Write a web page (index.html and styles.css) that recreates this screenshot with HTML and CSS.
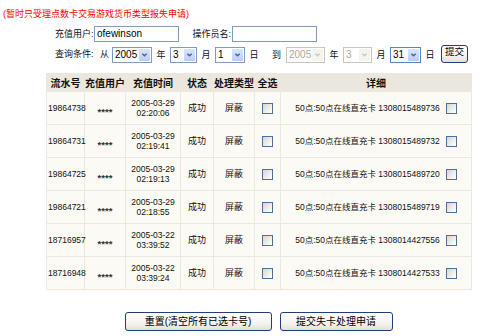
FILE: index.html
```html
<!DOCTYPE html>
<html lang="zh-CN">
<head>
<meta charset="utf-8">
<title>报失申请</title>
<link rel="stylesheet" href="styles.css">
</head>
<body>
<p class="notice">(暂时只受理点数卡交易游戏货币类型报失申请)</p>
<form class="query">
  <div class="row row-user">
    <span class="label lbl-user">充值用户:</span>
    <span class="textbox tb-user">ofewinson</span>
    <span class="label lbl-op">操作员名:</span>
    <span class="textbox tb-op"></span>
  </div>
  <div class="row row-date">
    <span class="label lbl-cond">查询条件:</span>
    <span class="label lbl-from">从</span>
    <span class="select w40"><span class="val">2005</span><span class="arrow"><svg viewBox="0 0 11 14" width="11" height="14"><path d="M3 5.5 L5.5 8 L8 5.5" fill="none" stroke="#4d6185" stroke-width="1.6"/></svg></span></span>
    <span class="unit">年</span>
    <span class="select w27"><span class="val">3</span><span class="arrow"><svg viewBox="0 0 11 14" width="11" height="14"><path d="M3 5.5 L5.5 8 L8 5.5" fill="none" stroke="#4d6185" stroke-width="1.6"/></svg></span></span>
    <span class="unit">月</span>
    <span class="select w30"><span class="val">1</span><span class="arrow"><svg viewBox="0 0 11 14" width="11" height="14"><path d="M3 5.5 L5.5 8 L8 5.5" fill="none" stroke="#4d6185" stroke-width="1.6"/></svg></span></span>
    <span class="unit">日</span>
    <span class="unit unit-to">到</span>
    <span class="select w39 disabled"><span class="val">2005</span><span class="arrow"><svg viewBox="0 0 11 14" width="11" height="14"><path d="M3 5.5 L5.5 8 L8 5.5" fill="none" stroke="#c9c7ba" stroke-width="1.6"/></svg></span></span>
    <span class="unit">年</span>
    <span class="select w29 disabled"><span class="val">3</span><span class="arrow"><svg viewBox="0 0 11 14" width="11" height="14"><path d="M3 5.5 L5.5 8 L8 5.5" fill="none" stroke="#c9c7ba" stroke-width="1.6"/></svg></span></span>
    <span class="unit">月</span>
    <span class="select w31 focus"><span class="val">31</span><span class="arrow"><svg viewBox="0 0 11 14" width="11" height="14"><path d="M3 5.5 L5.5 8 L8 5.5" fill="none" stroke="#4d6185" stroke-width="1.6"/></svg></span></span>
    <span class="unit">日</span>
    <button type="button" class="btn btn-submit">提交</button>
  </div>
</form>

<table class="records">
  <colgroup>
    <col class="c1"><col class="c2"><col class="c3"><col class="c4"><col class="c5"><col class="c6"><col class="c7">
  </colgroup>
  <thead>
    <tr><th>流水号</th><th>充值用户</th><th>充值时间</th><th>状态</th><th>处理类型</th><th>全选</th><th>详细</th></tr>
  </thead>
  <tbody>
    <tr><td class="sn">19864738</td><td class="user">****</td><td class="time">2005-03-29<br>02:20:06</td><td>成功</td><td>屏蔽</td><td><span class="check"></span></td><td class="detail"><span class="dtext">50点:50点在线直充卡 1308015489736</span><span class="check"></span></td></tr>
    <tr><td class="sn">19864731</td><td class="user">****</td><td class="time">2005-03-29<br>02:19:41</td><td>成功</td><td>屏蔽</td><td><span class="check"></span></td><td class="detail"><span class="dtext">50点:50点在线直充卡 1308015489732</span><span class="check"></span></td></tr>
    <tr><td class="sn">19864725</td><td class="user">****</td><td class="time">2005-03-29<br>02:19:13</td><td>成功</td><td>屏蔽</td><td><span class="check"></span></td><td class="detail"><span class="dtext">50点:50点在线直充卡 1308015489720</span><span class="check"></span></td></tr>
    <tr><td class="sn">19864721</td><td class="user">****</td><td class="time">2005-03-29<br>02:18:55</td><td>成功</td><td>屏蔽</td><td><span class="check"></span></td><td class="detail"><span class="dtext">50点:50点在线直充卡 1308015489719</span><span class="check"></span></td></tr>
    <tr><td class="sn">18716957</td><td class="user">****</td><td class="time">2005-03-22<br>03:39:52</td><td>成功</td><td>屏蔽</td><td><span class="check"></span></td><td class="detail"><span class="dtext">50点:50点在线直充卡 1308014427556</span><span class="check"></span></td></tr>
    <tr><td class="sn">18716948</td><td class="user">****</td><td class="time">2005-03-22<br>03:39:24</td><td>成功</td><td>屏蔽</td><td><span class="check"></span></td><td class="detail"><span class="dtext">50点:50点在线直充卡 1308014427533</span><span class="check"></span></td></tr>
  </tbody>
</table>

<div class="actions">
  <button type="button" class="btn btn-reset">重置(清空所有已选卡号)</button>
  <button type="button" class="btn btn-lost">提交失卡处理申请</button>
</div>
</body>
</html>
```

FILE: styles.css
```css
html, body {
  margin: 0;
  padding: 0;
  background: #fff;
}
body {
  width: 500px;
  height: 336px;
  overflow: hidden;
  font-family: "Liberation Sans", "Noto Sans CJK SC", sans-serif;
  font-size: 9px;
  color: #111;
}
.notice {
  margin: 0;
  padding: 9px 0 0 3px;
  height: 10px;
  line-height: 10px;
  font-size: 9px;
  color: #ff0000;
}

.query {
  margin: 0;
  padding: 7px 0 0 55px;
}
.row {
  display: flex;
  align-items: center;
}
.row-user {
  height: 16px;
}
.row-date {
  margin-top: 3px;
  height: 18px;
}
.label {
  font-size: 9px;
  line-height: 12px;
  white-space: nowrap;
}
.lbl-user { width: 39px; }
.lbl-op { width: 52px; text-align: right; padding-right: 1px; }
.lbl-cond { width: 45px; }
.lbl-from { width: 12px; }

.textbox {
  box-sizing: border-box;
  height: 16px;
  border: 1px solid #7f9db9;
  background: #fff;
  font-size: 10px;
  line-height: 14px;
  padding-left: 2px;
  color: #000;
}
.tb-user { width: 85px; }
.tb-op { width: 85px; }

.select {
  box-sizing: border-box;
  height: 16px;
  border: 1px solid #7f9db9;
  background: #fff;
  display: flex;
  align-items: stretch;
  font-size: 10px;
  color: #000;
  align-self: flex-end;
}
.select .val {
  flex: 1;
  line-height: 14px;
  padding-left: 2px;
}
.select .arrow {
  width: 11px;
  margin: 1px 1px 1px 0;
  display: flex;
  align-items: center;
  justify-content: center;
  background: linear-gradient(180deg, #d9e5fd 0%, #b9cdf7 100%);
  border-radius: 1px;
}
.select .arrow svg { display: block; width: 11px; height: 12px; }
.select.disabled {
  border-color: #c9c7ba;
  color: #aca899;
}
.select.disabled .arrow {
  background: #f4f3ee;
}
.select.focus {
  border-color: #5a84c6;
}
.w40 { width: 40px; }
.w27 { width: 27px; }
.w30 { width: 30px; }
.w39 { width: 39px; }
.w29 { width: 29px; }
.w31 { width: 31px; }

.unit {
  width: 18px;
  text-align: center;
  font-size: 9px;
  line-height: 12px;
  align-self: flex-end;
  padding-bottom: 2px;
}
.unit-to {
  width: 23px;
  text-align: right;
  box-sizing: border-box;
  padding-right: 5px;
}

.btn {
  box-sizing: border-box;
  margin: 0;
  border: 1px solid #1f3f77;
  border-radius: 3px;
  background: linear-gradient(180deg, #ffffff 0%, #f4f3ee 60%, #e3e1d6 100%);
  font-family: "Liberation Sans", "Noto Sans CJK SC", sans-serif;
  color: #000;
  padding: 0;
  cursor: pointer;
}
.btn-submit {
  width: 27px;
  height: 18px;
  font-size: 9.5px;
  line-height: 10px;
  padding-bottom: 5px;
  margin-left: 2px;
}

.records {
  margin: 10px 0 0 46px;
  width: 425px;
  border-collapse: collapse;
  table-layout: fixed;
  background: #fbfaf5;
  border-right: 1px solid #d9d9d6;
  border-bottom: 1px solid #d9d9d6;
}
.c1 { width: 38px; }
.c2 { width: 41px; }
.c3 { width: 55px; }
.c4 { width: 33px; }
.c5 { width: 41px; }
.c6 { width: 26px; }
.c7 { width: 191px; }

.records th,
.records td {
  border: 1px solid #ece8dd;
  padding: 0;
  text-align: center;
  vertical-align: middle;
}
.records th {
  height: 17px;
  background: #ece7de;
  font-weight: bold;
  font-size: 10px;
  line-height: 12px;
  font-family: "Noto Sans CJK SC", sans-serif;
  white-space: nowrap;
}
.records td {
  height: 32px;
  font-size: 9px;
  line-height: 10px;
}
.records td.sn {
  text-align: left;
  padding-left: 1px;
  font-size: 8.5px;
}
.records td.user {
  padding-top: 7px;
  box-sizing: border-box;
  font-size: 9.5px;
  font-weight: bold;
  color: #333;
}
.records td.time {
  font-size: 8.5px;
}
.detail {
  white-space: nowrap;
}
.dtext {
  font-size: 8.5px;
  vertical-align: middle;
}
.check {
  display: inline-block;
  box-sizing: border-box;
  width: 11px;
  height: 11px;
  border: 1px solid #4f6f96;
  background: linear-gradient(135deg, #d6d6cf 0%, #f4f4f0 70%, #ffffff 100%);
  vertical-align: middle;
}
.detail .check {
  margin-left: 6px;
}

.actions {
  margin: 22px 0 0 46px;
  width: 425px;
  display: flex;
  justify-content: center;
  gap: 8px;
}
.btn-reset {
  width: 147px;
  height: 19px;
  font-size: 10px;
  line-height: 17px;
}
.btn-lost {
  width: 113px;
  height: 19px;
  font-size: 10px;
  line-height: 17px;
}
```
